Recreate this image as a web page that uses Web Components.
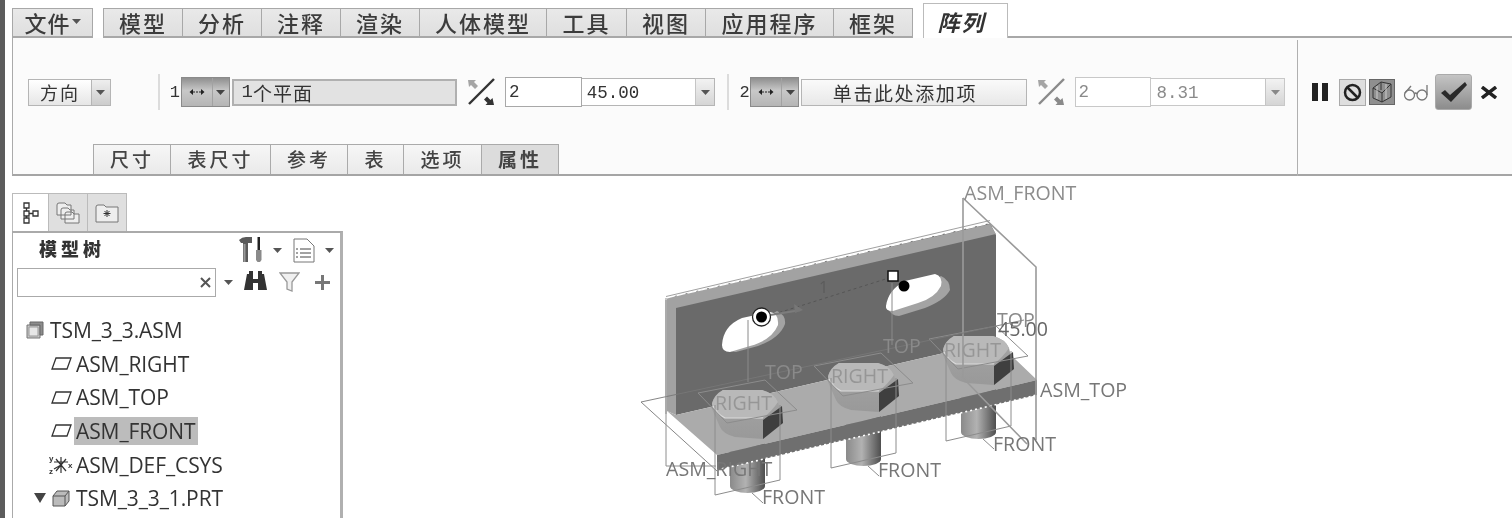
<!DOCTYPE html>
<html lang="zh">
<head>
<meta charset="utf-8">
<title>阵列</title>
<style>
  html, body { margin: 0; height: 518px; overflow: hidden; background: #fff; }
  body {
    display: flex;
    flex-direction: column;
    box-sizing: border-box;
    width: 1512px;
    border-left: 5px solid #5c5c5c;
    padding-left: 7px;
    padding-top: 8px;
    color: #333;
    font-family: "Noto Sans CJK SC", sans-serif;
    filter: blur(.45px);
  }
  .work { display: flex; flex: 1; min-height: 0; }
</style>
</head>
<body>
  <ribbon-tabs></ribbon-tabs>
  <pattern-panel></pattern-panel>
  <div class="work">
    <model-tree></model-tree>
    <cad-view></cad-view>
  </div>

<script>
const caret = (c = "#555") => `<svg width="9" height="5" viewBox="0 0 9 5"><path d="M0 0h9L4.500 5z" fill="${c}"/></svg>`;

class RibbonTabs extends HTMLElement {
  constructor() {
    super();
    this.attachShadow({ mode: "open" });
    const tabs = [["模型", 80], ["分析", 79], ["注释", 79], ["渲染", 79], ["人体模型", 127], ["工具", 80], ["视图", 79], ["应用程序", 128], ["框架", 79]];
    this.shadowRoot.innerHTML = `
    <style>
      :host { display: flex; height: 30px; align-items: flex-end; font-size: 22px; font-weight: 500; letter-spacing: 2px; }
      .tab {
        box-sizing: border-box;
        height: 30px;
        display: flex;
        align-items: center;
        justify-content: center;
        padding-bottom: 2px;
        background: linear-gradient(#e9e9e9, #dfdfdf);
        border: 1px solid #a8a8a8;
        border-width: 1px 1px 2px 0;
        color: #3c3c3c;
      }
      .file { width: 81px; border-left: 1px solid #a8a8a8; margin-right: 10px; gap: 1px; letter-spacing: 1px; }
      .first { border-left: 1px solid #a8a8a8; }
      .active {
        box-sizing: border-box;
        width: 85px;
        height: 35px;
        margin-left: 10px;
        padding-right: 8px;
        display: flex;
        align-items: center;
        justify-content: center;
        background: #fff;
        border: 1px solid #bbb;
        border-bottom: 0;
        font-style: italic;
        font-weight: 700;
        letter-spacing: 2px;
      }
      .rest { flex: 1; border-bottom: 2px solid #a8a8a8; }
    </style>
    <div class="tab file">文件${caret()}</div>
    ${tabs.map(([t, w], i) => `<div class="tab ${i ? "" : "first"}" style="width:${w}px">${t}</div>`).join("")}
    <div class="active">阵列</div>
    <div class="rest"></div>
    `;
  }
}
customElements.define("ribbon-tabs", RibbonTabs);

class ArrowToggle extends HTMLElement {
  constructor() {
    super();
    this.attachShadow({ mode: "open" });
    this.shadowRoot.innerHTML = `
    <style>
      :host { display: flex; box-sizing: border-box; width: 49px; height: 30px; background: linear-gradient(#8f8f8f, #c8c8c8 45%, #b5b5b5); border: 1px solid #8a8a8a; }
      div { display: flex; align-items: center; justify-content: center; }
      .a { width: 30px; border-right: 1px solid #a2a2a2; }
      .b { flex: 1; }
    </style>
    <div class="a"><svg width="16" height="8" viewBox="0 0 16 8"><path d="M4 1L0.500 4 4 7zM12 1l3.500 3L12 7z" fill="#222"/><path d="M4 4h8" stroke="#222" stroke-width="1" stroke-dasharray="2 1"/></svg></div>
    <div class="b">${caret("#444")}</div>
    `;
  }
}
customElements.define("arrow-toggle", ArrowToggle);

class FlipIcon extends HTMLElement {
  constructor() {
    super();
    this.attachShadow({ mode: "open" });
    const c = this.hasAttribute("dim") ? "#8a8a8a" : "#333";
    this.shadowRoot.innerHTML = `
    <style>:host { display: block; width: 28px; height: 28px; }</style>
    <svg width="28" height="28" viewBox="0 0 28 28">
      <path d="M2 26L27 1" stroke="${c}" stroke-width="2.400"/>
      <path d="M1 2h8l-2 2 4 4-3 3-4-4-2 2z" fill="#a5a5a5"/>
      <path d="M27 27h-8.500l2-2-3.500-3.500 3-3 3.500 3.500 2-2z" fill="${c}"/>
    </svg>`;
  }
}
customElements.define("flip-icon", FlipIcon);

class PatternPanel extends HTMLElement {
  constructor() {
    super();
    this.attachShadow({ mode: "open" });
    this.shadowRoot.innerHTML = `
    <style>
      :host { display: flex; box-sizing: border-box; height: 138px; background: #fbfbfb; border-left: 1px solid #aaa; border-bottom: 2px solid #a5a5a5; }
      .left { width: 1284px; display: flex; flex-direction: column; }
      .row { flex: 1; display: flex; align-items: center; padding: 2px 0 0 15px; font-size: 18px; color: #333; }
      .dir { box-sizing: border-box; display: flex; width: 83px; height: 27px; border: 1px solid #b5b5b5; background: linear-gradient(#fff, #e6e6e6); margin-right: 47px; }
      .dir span { width: 62px; display: flex; align-items: center; justify-content: center; letter-spacing: 2px; }
      .drop { flex: 1; display: flex; align-items: center; justify-content: center; border-left: 1px solid #b5b5b5; background: linear-gradient(#eee, #ccc); }
      .sep { width: 2px; height: 36px; background: #dcdcdc; margin-right: 10px; }
      .num { font-family: "Liberation Mono", monospace; width: 11px; font-size: 17px; }
      .ref { box-sizing: border-box; width: 226px; height: 27px; margin-left: 2px; margin-right: 10px; border: 2px solid #b0b0b0; background: #e2e2e2; display: flex; align-items: center; padding-left: 8px; font-size: 19px; letter-spacing: 1px; }
      .ref b { font-family: "Liberation Mono", monospace; font-weight: 400; letter-spacing: 0; }
      .add { justify-content: center; padding: 0 18px 0 0; background: linear-gradient(#fafafa, #e8e8e8); border: 1px solid #b5b5b5; letter-spacing: 1.600px; }
      .count { box-sizing: border-box; width: 77px; height: 30px; margin-left: 10px; border: 1px solid #a8a8a8; background: #fff; display: flex; align-items: center; padding-left: 3px; font: 17.500px "Liberation Mono", monospace; }
      .select { box-sizing: border-box; width: 134px; height: 28px; border: 1px solid #b5b5b5; border-left: 0; background: #fff; display: flex; align-items: center; font: 17.500px "Liberation Mono", monospace; padding-left: 5px; margin-right: 12px; }
      .select span { flex: 1; padding-top: 2px; }
      .select i { width: 18px; align-self: stretch; display: flex; align-items: center; justify-content: center; background: linear-gradient(#f2f2f2, #d5d5d5); border-left: 1px solid #c5c5c5; }
      .dim { color: #8a8a8a; border-color: #c8c8c8; }
      .tabs { display: flex; height: 30px; padding-left: 80px; font-size: 19px; font-weight: 500; letter-spacing: 3px; color: #444; }
      .tabs div { box-sizing: border-box; display: flex; align-items: center; justify-content: center; padding-bottom: 2px; background: linear-gradient(#f6f6f6, #eaeaea); border: 1px solid #aaa; border-width: 1px 1px 0 0; }
      .tabs .f { border-left: 1px solid #aaa; }
      .tabs .on { background: #dcdcdc; font-weight: 700; }
      .right { flex: 1; margin-top: 2px; border-left: 1px solid #b0b0b0; display: flex; align-items: center; padding-bottom: 32px; box-sizing: border-box; padding-left: 14px; height: 136px; }
      .right > * { flex: none; }
      .stop { box-sizing: border-box; width: 27px; height: 27px; margin-left: 11px; border: 1px solid #aaa; background: #dedede; display: flex; align-items: center; justify-content: center; }
      .geo { width: 26px; height: 26px; margin-left: 3px; background: #8f8f8f; border: 1px solid #666; box-sizing: border-box; }
      .ok { box-sizing: border-box; width: 37px; height: 36px; margin-left: 6px; border-radius: 3px; background: linear-gradient(#c4c4c4, #8c8c8c); border: 1px solid #aaa; display: flex; align-items: center; justify-content: center; }
    </style>
    <div class="left">
      <div class="row">
        <div class="dir"><span>方向</span><div class="drop">${caret()}</div></div>
        <div class="sep"></div>
        <div class="num">1</div>
        <arrow-toggle></arrow-toggle>
        <div class="ref"><b>1</b>个平面</div>
        <flip-icon></flip-icon>
        <div class="count">2</div>
        <div class="select"><span>45.00</span><i>${caret()}</i></div>
        <div class="sep"></div>
        <div class="num">2</div>
        <arrow-toggle></arrow-toggle>
        <div class="ref add">单击此处添加项</div>
        <flip-icon dim></flip-icon>
        <div class="count dim">2</div>
        <div class="select dim"><span>8.31</span><i>${caret("#888")}</i></div>
      </div>
      <div class="tabs">
        <div class="f" style="width:78px">尺寸</div>
        <div style="width:100px">表尺寸</div>
        <div style="width:77px">参考</div>
        <div style="width:56px">表</div>
        <div style="width:78px">选项</div>
        <div class="on" style="width:77px">属性</div>
      </div>
    </div>
    <div class="right">
      <svg width="16" height="18" viewBox="0 0 16 18"><path d="M0 0h6v18H0zM10 0h6v18h-6z" fill="#222"/></svg>
      <div class="stop"><svg width="19" height="19" viewBox="0 0 19 19"><circle cx="9.500" cy="9.500" r="7.500" fill="none" stroke="#222" stroke-width="2.500"/><path d="M4 4l11 11" stroke="#222" stroke-width="2.500"/></svg></div>
      <div class="geo"><svg width="24" height="24" viewBox="0 0 24 24" fill="none" stroke="#333" stroke-width="1"><path d="M3 8l8-6 10 2v13l-9 5-9-4zM3 8l9 5 9-9M12 13v9M11 2v8"/><path d="M16 4v15M7 6v13" stroke="#ccc"/></svg></div>
      <svg style="margin-left:8px" width="26" height="20" viewBox="0 0 26 20" fill="none" stroke="#777" stroke-width="1.300"><circle cx="6.500" cy="13" r="5"/><circle cx="19" cy="13" r="5"/><path d="M11.500 12q1-2 2.500 0M2 11L8 4M24 13V3"/></svg>
      <div class="ok"><svg width="28" height="22" viewBox="0 0 28 22"><path d="M1 12l4-3 5 5L25 1l2 3-16 17z" fill="#2a2a2a"/></svg></div>
      <svg style="margin-left:9px" width="16" height="13" viewBox="0 0 16 13"><path d="M1 1l14 11M15 1L1 12" stroke="#222" stroke-width="3.400"/></svg>
    </div>
    `;
  }
}
customElements.define("pattern-panel", PatternPanel);

class TreeRow extends HTMLElement {
  constructor() {
    super();
    this.attachShadow({ mode: "open" }).innerHTML = `
    <style>
      :host { display: flex; height: 33.700px; align-items: center; font: 21px "Open Sans", sans-serif; letter-spacing: -.1px; color: #333; }
      .icon { display: flex; align-items: center; justify-content: center; width: 24px; height: 24px; margin-right: 1px; }
      .label { padding: 0 2px; line-height: 28px; white-space: nowrap; }
      :host([selected]) .label { background: #bcbcbc; }
    </style>
    <div class="icon"><slot name="icon"></slot></div>
    <div class="label"><slot></slot></div>
    `;
  }
}
customElements.define("tree-row", TreeRow);

class ModelTree extends HTMLElement {
  constructor() {
    super();
    this.attachShadow({ mode: "open" });
    const plane = `<svg slot="icon" width="21" height="13" viewBox="0 0 21 13"><path d="M5 1h15l-4 11H1z" fill="#fff" stroke="#333" stroke-width="1.300"/></svg>`;
    const cube = `<svg slot="icon" width="18" height="17" viewBox="0 0 18 17"><path d="M1 6l4-5h12v10l-4 5H1z" fill="#bbb" stroke="#555"/><path d="M1 6h12v10M13 6l4-5" fill="none" stroke="#555"/></svg>`;
    this.shadowRoot.innerHTML = `
    <style>
      :host { display: flex; flex-direction: column; box-sizing: border-box; width: 331px; padding-top: 17px; flex: none; }
      .tabs { display: flex; height: 38px; }
      .tabs div { box-sizing: border-box; width: 39px; display: flex; align-items: center; justify-content: center; background: #dfdfdf; border: 1px solid #bbb; border-left: 0; border-bottom: 0; }
      .tabs .on { width: 37px; background: #fff; border-left: 1px solid #bbb; }
      .body { flex: 1; box-sizing: border-box; border: 1px solid #aaa; border-top: 2px solid #aaa; border-right: 3px solid #b0b0b0; border-bottom: 0; padding: 0 0 0 4px; }
      .head { display: flex; align-items: center; height: 34px; }
      .head b { font-size: 18px; font-weight: 900; letter-spacing: 4px; margin-left: 22px; margin-bottom: 4px; color: #333; }
      .head .tools { margin-left: auto; display: flex; align-items: center; gap: 10px; padding-right: 6px; }
      .search { display: flex; align-items: center; height: 30px; }
      .input { box-sizing: border-box; width: 199px; height: 29px; border: 1px solid #aaa; display: flex; align-items: center; justify-content: flex-end; padding-right: 3px; background: #fff; }
      .search .tools { display: flex; align-items: center; margin-left: 8px; gap: 8px; }
      .list { padding-top: 16px; padding-left: 8px; }
      .indent { padding-left: 24px; }
      .first { margin-left: -2px; }
      .tri { display: flex; align-items: center; padding-left: 9px; gap: 3px; }
      .tri tree-row { flex: 1; }
      .axis { font: 700 8px "Liberation Sans", sans-serif; fill: #333; }
    </style>
    <div class="tabs">
      <div class="on"><svg width="16" height="22" viewBox="0 0 16 22" fill="none" stroke="#333" stroke-width="1.300"><path d="M1 1h5v5H1zM1 9h5v5H1zM1 16h5v5H1zM10 9h5v5h-5zM3.500 6v3M3.500 14v2M6 11.500h4"/></svg></div>
      <div><svg width="26" height="24" viewBox="0 0 26 24" stroke="#777" fill="#eee"><path d="M2 4q0-2 2-2h6l2 2h4v10H2zM6 9q0-2 2-2h5l2 2h4v9H6zM10 13q0-2 2-2h5l2 2h5v9H10z"/></svg></div>
      <div><svg width="24" height="20" viewBox="0 0 24 20" stroke="#777" fill="#eee"><path d="M1 4q0-2 2-2h6l2 2h12v15H1z"/><path d="M12 7v7M8.500 10.500h7M9.500 8l5 5M14.500 8l-5 5" stroke="#333"/></svg></div>
    </div>
    <div class="body">
      <div class="head">
        <b>模型树</b>
        <div class="tools">
          <svg width="24" height="26" viewBox="0 0 24 26"><path d="M0 3q3-3 7-3h6v6H9v19H4V6H2z" fill="#5a5a5a"/><path d="M4.500 7h2v18h-2z" fill="#999"/><path d="M18.500 0h2.500v13h-2.500z" fill="#222"/><path d="M17 13h5.500v10l-1.500 2h-2.500L17 23z" fill="#8a8a8a"/></svg>
          ${caret()}
          <svg style="margin-left:1px" width="22" height="25" viewBox="0 0 22 25" fill="#fff" stroke="#777"><path d="M1 1h13l7 7v16H1z"/><path d="M7 11h11M7 15h11M7 19h11M3 11h2M3 15h2M3 19h2" stroke="#444"/></svg>
          ${caret()}
        </div>
      </div>
      <div class="search">
        <div class="input"><svg width="13" height="13" viewBox="0 0 13 13"><path d="M2 2l9 9M11 2l-9 9" stroke="#555" stroke-width="2"/></svg></div>
        <div class="tools">
          ${caret()}
          <svg style="margin-left:3px" width="23" height="22" viewBox="0 0 23 22" fill="#333"><path d="M3 3h6v5h5V3h6l3 16h-9v-7h-5v7H0z"/><path d="M5 0h4v3H5zM14 0h4v3h-4z"/></svg>
          <svg style="margin-left:4px" width="21" height="20" viewBox="0 0 21 20" fill="#f0f0f0" stroke="#999" stroke-width="1.300"><path d="M1 1h19l-7 9v9l-5-2v-7z"/></svg>
          <svg style="margin-left:7px" width="15" height="15" viewBox="0 0 15 15"><path d="M6 0h3v6h6v3H9v6H6V9H0V6h6z" fill="#777"/></svg>
        </div>
      </div>
      <div class="list">
        <tree-row class="first"><svg slot="icon" width="18" height="18" viewBox="0 0 18 18"><path d="M1 4h13v13H1z" fill="#c5c5c5" stroke="#777"/><path d="M4 1h13v13h-3V4H4z" fill="#8c8c8c" stroke="#666"/><path d="M3 6h9v9H3z" fill="#e6e6e6" stroke="#999"/></svg>TSM_3_3.ASM</tree-row>
        <div class="indent"><tree-row>${plane}ASM_RIGHT</tree-row></div>
        <div class="indent"><tree-row>${plane}ASM_TOP</tree-row></div>
        <div class="indent"><tree-row selected>${plane}ASM_FRONT</tree-row></div>
        <div class="indent"><tree-row><svg slot="icon" width="24" height="22" viewBox="0 0 24 22"><path d="M12 3v16M7 5l10 12M17 5L7 17M12 11l-7 4M5 8h14" fill="none" stroke="#333" stroke-width="1.200"/><text class="axis" x="0" y="7">y</text><text class="axis" x="0" y="20">z</text><text class="axis" x="19" y="14">x</text></svg>ASM_DEF_CSYS</tree-row></div>
        <div class="tri"><svg width="12" height="10" viewBox="0 0 12 10"><path d="M0 0h12L6 10z" fill="#444"/></svg><tree-row>${cube}TSM_3_3_1.PRT</tree-row></div>
      </div>
    </div>
    `;
  }
}
customElements.define("model-tree", ModelTree);

class CadView extends HTMLElement {
  constructor() {
    super();
    this.attachShadow({ mode: "open" });
    const bolts = [
      { x: 0, y: 0, right: [715, 403], top: [765, 372], front: [762, 497] },
      { x: 116, y: -27, right: [831, 376], top: [883, 346], front: [878, 470] },
      { x: 231, y: -54, right: [944, 350], top: [997, 320], front: [993, 444] }
    ];
    const shank = b => `<g transform="translate(${b.x} ${b.y})">
      <path d="M730 430h35v56a17.500 7 0 0 1-35 0z" fill="url(#shank)"/>
    </g>`;
    const head = b => `<g transform="translate(${b.x} ${b.y})">
      <path d="M712 403q2-8 11-13h39q12 3 16 12l5 21-20 16-28-2q-12-3-15-10l-8-18z" fill="url(#headside)"/>
      <path d="M712 404q2-9 11-14h39q12 3 16 12-6 9-15 16h-38q-9-5-13-14z" fill="#b9b9b9"/>
      <path d="M713 406q4 8 12 12h38" fill="none" stroke="#dcdcdc" stroke-width="1.200"/>
      <path d="M763 420l19-14 1 17-20 16z" fill="#3f3f3f"/>
    </g>`;
    const planes = b => `<g transform="translate(${b.x} ${b.y})" fill="none" stroke="#8c8c8c" stroke-width="1">
      <path d="M698 393l67-13 32 30-70 13z"/>
      <path d="M715 405v90l65-15v-75M752 493l11 10"/>
    </g>`;
    const labels = b => `
      <text x="${b.right[0]}" y="${b.right[1] + 7}" fill="#969696">RIGHT</text>
      <text x="${b.top[0]}" y="${b.top[1] + 7}" fill="#8a8a8a">TOP</text>
      <text x="${b.front[0]}" y="${b.front[1] + 7}" fill="#777">FRONT</text>`;
    this.shadowRoot.innerHTML = `
    <style>
      :host { display: block; flex: 1; min-width: 0; background: #fff; }
      svg { display: block; }
      text { font: 19.600px "Open Sans", sans-serif; }
    </style>
    <svg width="1169" height="342" viewBox="343 176 1169 342">
      <defs>
        <linearGradient id="shank"><stop offset="0" stop-color="#8a8a8a"/><stop offset=".45" stop-color="#b2b2b2"/><stop offset="1" stop-color="#4e4e4e"/></linearGradient>
        <linearGradient id="headside" x1="0" y1="0" x2="0" y2="1"><stop offset="0" stop-color="#a5a5a5"/><stop offset="1" stop-color="#999"/></linearGradient>
      </defs>
      ${bolts.map(shank).join("")}
      <!-- plate -->
      <path d="M666 298L990 223l6 12v106L676 415v-108z" fill="#6a6a6a"/>
      <path d="M667 298L990 224l6 10-320 74v107l-9-4z" fill="#a2a2a2"/>
      <path d="M666 298L990 223" stroke="#fff" stroke-width="1.300" stroke-dasharray="9 2"/>
      <path d="M666 298L990 222" stroke="#888" stroke-width=".8" transform="translate(0 -1.500)"/>
      <path d="M666 298v116" stroke="#c8c8c8" stroke-width="2"/>
      <path d="M667 411l9 4 320-74 41 39-320 75z" fill="#ababab"/>
      <path d="M717 455l320-75v15l-320 75z" fill="#6f6f6f"/>
      <path d="M717 470l320-75" stroke="#fff" stroke-width="1.600" stroke-dasharray="2 3"/>
      <!-- slots -->
      <path d="M722 345q6 7 14 7l22-6q22-8 27-22 1-9-8-13z" fill="#a3a3a3"/>
      <path d="M722 345q1-19 20-27l28-6q9 1 8 13-6 15-28 21l-20 6q-8 0-8-7z" fill="#fff"/>
      <path d="M886 306q5 10 13 10l26-8q20-8 25-18 0-10-9-14z" fill="#a3a3a3"/>
      <path d="M886 306q2-16 19-25l30-7q8 2 6 12-6 12-23 17l-25 8q-8 0-7-5z" fill="#fff"/>
      <!-- dimension -->
      <path d="M762 318L892 277" stroke="#555" stroke-width="1" stroke-dasharray="3 3"/>
      <path d="M764 316l37-6" stroke="#7c7c7c" stroke-width="2"/><path d="M803 310l-9-6 1 9z" fill="#777"/>
      <text x="819" y="293" fill="#5c5c5c" style="font-size:16px">1</text>
      ${bolts.map(head).join("")}
      ${bolts.map(planes).join("")}
      <!-- datum planes -->
      <g fill="none" stroke="#9a9a9a">
        <path d="M963 198v180l64 66" stroke-width="1.600"/>
        <path d="M963 198l73 69v173" stroke-width="1.600"/>
        <path d="M641 402L1024 320M641 402l76 69" stroke="#777" stroke-width=".9"/>
        <path d="M666 300v166M666 466h50" stroke="#8e8e8e" stroke-width="1"/>
        <path d="M748 320v62M892 283v62" stroke="#8a8a8a" stroke-width="1"/>
      </g>
      <!-- handles -->
      <circle cx="761.500" cy="317" r="9" fill="#fff" stroke="#222" stroke-width="1.300"/>
      <circle cx="761.500" cy="317" r="5.500" fill="#000"/>
      <rect x="888" y="271" width="10" height="10" fill="#fff" stroke="#111" stroke-width="1.500"/>
      <circle cx="904" cy="286" r="5.500" fill="#000"/>
      <text x="964" y="200" fill="#8c8c8c">ASM_FRONT</text>
      <text x="1040" y="397" fill="#777">ASM_TOP</text>
      <text x="666" y="476" fill="#777">ASM_RIGHT</text>
      ${bolts.map(labels).join("")}
      <text x="998" y="336" fill="#666">45.00</text>
    </svg>
    `;
  }
}
customElements.define("cad-view", CadView);
</script>
</body>
</html>
